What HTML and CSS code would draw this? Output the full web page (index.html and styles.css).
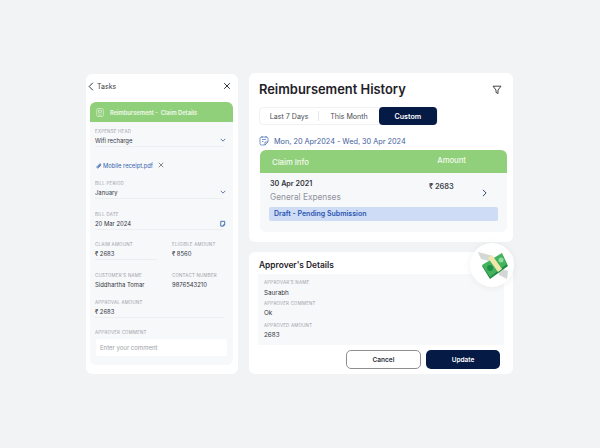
FILE: index.html
```html
<!DOCTYPE html>
<html lang="en">
  <head>
    <meta charset="UTF-8" />
    <title>Reimbursement</title>
    <link rel="stylesheet" href="styles.css">
  </head>
  <body>
    <div class="page">
      <section class="card task-card">
        <div class="task-top">
          <svg class="back-icon" viewBox="0 0 8 12"><path d="M6.500 1 1.500 6l5 5" /></svg>
          <span class="task-title">Tasks</span>
          <svg class="close-icon" viewBox="0 0 10 10"><path d="M1.500 1.500l7 7M8.500 1.500l-7 7" /></svg>
        </div>
        <div class="claim">
          <div class="claim-head">
            <svg class="doc-icon" viewBox="0 0 12 14"><rect x="1" y="1" width="10" height="12" rx="2" /><rect x="3.500" y="3.500" width="5" height="3" /><path d="M3.500 9h2M7 9h1.500M3.500 11h5" /></svg>
            <span>Reimbursement -&nbsp; Claim Details</span>
          </div>
          <div class="claim-body">
            <div class="field">
              <div class="label">EXPENSE HEAD</div>
              <div class="value-row">
                <span class="value">Wifi recharge</span>
                <svg class="chev" viewBox="0 0 8 5"><path d="M1 1l3 3 3-3" /></svg>
              </div>
            </div>
            <div class="attachment">
              <svg class="clip-icon" viewBox="0 0 8 8"><path d="M6.800 3.600 3.800 6.600C3 7.400 1.600 6.200 2.400 5.300L5.400 2.200C6 1.600 6.900 2.400 6.300 3L3.500 5.800" /></svg>
              <span>Mobile receipt.pdf</span>
              <svg class="x-icon" viewBox="0 0 8 8"><path d="M1 1l6 6M7 1l-6 6" /></svg>
            </div>
            <div class="field field-period">
              <div class="label">BILL PERIOD</div>
              <div class="value-row">
                <span class="value">January</span>
                <svg class="chev" viewBox="0 0 8 5"><path d="M1 1l3 3 3-3" /></svg>
              </div>
            </div>
            <div class="field field-date">
              <div class="label">BILL DATE</div>
              <div class="value-row">
                <span class="value">20 Mar 2024</span>
                <svg class="cal-icon" viewBox="0 0 8 8"><path d="M5 7H2V1.500h4.500V5.500zM5 7V5.500h1.500" /></svg>
              </div>
            </div>
            <div class="two-col">
              <div class="field">
                <div class="label">CLAIM AMOUNT</div>
                <div class="value-row"><span class="value">₹ 2683</span></div>
              </div>
              <div class="field plain">
                <div class="label">ELIGIBLE AMOUNT</div>
                <div class="value-row"><span class="value">₹ 8560</span></div>
              </div>
              <div class="field plain">
                <div class="label">CUSTOMER'S NAME</div>
                <div class="value-row"><span class="value">Siddhartha Tomar</span></div>
              </div>
              <div class="field plain">
                <div class="label">CONTACT NUMBER</div>
                <div class="value-row"><span class="value">9876543210</span></div>
              </div>
            </div>
            <div class="field field-approval">
              <div class="label">APPROVAL AMOUNT</div>
              <div class="value-row"><span class="value">₹ 2683</span></div>
            </div>
            <div class="label comment-label">APPROVER COMMENT</div>
            <div class="comment-box">Enter your comment</div>
          </div>
        </div>
      </section>

      <div class="right-col">
        <section class="card history-card">
          <div class="history-top">
            <h1>Reimbursement History</h1>
            <svg class="filter-icon" viewBox="0 0 10 10"><path d="M1 1.200h8L6 5v3.600L4 7.400V5z" /></svg>
          </div>
          <div class="tabs">
            <div class="tab tab-first">Last 7 Days</div>
            <div class="tab tab-month">This Month</div>
            <div class="tab tab-active">Custom</div>
          </div>
          <div class="date-range">
            <svg class="range-icon" viewBox="0 0 10 10"><path d="M6 9H2.500A1.500 1.500 0 0 1 1 7.500v-5A1.500 1.500 0 0 1 2.500 1h5A1.500 1.500 0 0 1 9 2.500V6zM6 9V6h3M3 3.500h4M3 5.500h1.500M3 0v2M7 0v2" /></svg>
            <span>Mon, 20 Apr2024 - Wed, 30 Apr 2024</span>
          </div>
          <div class="claim-table">
            <div class="table-head">
              <span class="head-info">Claim Info</span>
              <span class="head-amount">Amount</span>
            </div>
            <div class="table-body">
              <div class="row-main">
                <div class="row-left">
                  <div class="row-date">30 Apr 2021</div>
                  <div class="row-type">General Expenses</div>
                </div>
                <div class="row-amount">₹ 2683</div>
                <svg class="row-chev" viewBox="0 0 6 10"><path d="M1 1l4 4-4 4" /></svg>
              </div>
              <div class="status">Draft - Pending Submission</div>
            </div>
          </div>
        </section>

        <section class="card approver-card">
          <h2>Approver's Details</h2>
          <div class="approver-box">
            <div class="label">APPROVAR'S NAME</div>
            <div class="value approver-value name-value">Saurabh</div>
            <div class="label comment-gap">APPROVER COMMENT</div>
            <div class="value approver-value">Ok</div>
            <div class="label amount-gap">APPROVED AMOUNT</div>
            <div class="value approver-value">2683</div>
          </div>
          <div class="actions">
            <button class="btn-cancel">Cancel</button>
            <button class="btn-update">Update</button>
          </div>
          <div class="money-badge">
            <svg viewBox="0 0 44 44" width="44" height="44">
              <path d="M8 9l15 4-4 5-8-2z" fill="#d3d8d4" />
              <path d="M27 24l11 4-1 8-8-4z" fill="#d3d8d4" />
              <path d="M12 23l8 13L38 23 32 11z" fill="#1c8a42" />
              <path d="M12 22 32 10l5 11-17 13z" fill="#45b25e" />
              <path d="M18 15l4-3 10 14-4 3z" fill="#f0e7ad" />
              <circle cx="20" cy="25" r="3" fill="#1f8f45" />
              <circle cx="31" cy="17" r="2.500" fill="#8fdca0" />
            </svg>
          </div>
        </section>
      </div>
    </div>
  </body>
</html>
```

FILE: styles.css
```css
body {
  margin: 0;
  background: #f1f3f5;
  font-family: "Inter", sans-serif;
  color: #2b2f38;
}
.page {
  display: flex;
  gap: 11px;
  width: 600px;
  height: 448px;
  box-sizing: border-box;
  padding: 73px 0 0 86px;
}
.card {
  background: white;
  border-radius: 6px;
}

/* left card */
.task-card {
  width: 152px;
  height: 300px;
  margin-top: 1px;
  padding: 0 5px 0 4px;
  box-sizing: border-box;
}
.task-top {
  display: flex;
  align-items: center;
  height: 24px;
  padding-bottom: 4px;
}
.task-title {
  font-size: 7px;
  margin-left: 3px;
  color: #3a3e46;
}
.back-icon {
  width: 6px;
  height: 9px;
  margin-left: -2px;
  fill: none;
  stroke: #2b2f38;
  stroke-width: 1.300;
}
.close-icon {
  width: 8px;
  height: 8px;
  margin-left: auto;
  margin-right: 2px;
  fill: none;
  stroke: #2b2f38;
  stroke-width: 1.200;
}
.claim {
  background: #f7f8fa;
  border-radius: 6px;
  height: 263px;
}
.claim-head {
  display: flex;
  align-items: center;
  gap: 6px;
  height: 20px;
  padding-left: 6px;
  background: #90d07a;
  border-radius: 6px 6px 0 0;
  color: #f2f9ec;
  font-size: 5.750px;
  font-weight: 600;
}
.doc-icon {
  width: 8px;
  height: 11px;
  fill: none;
  stroke: #f2f9ec;
  stroke-width: 0.800;
}
.claim-body {
  padding: 7px 6px 0 5px;
}
.label {
  font-size: 4.400px;
  letter-spacing: 0.250px;
  color: #9a9ea6;
  line-height: 6px;
}
.value {
  font-size: 5.900px;
  color: #33373f;
}
.value-row {
  display: flex;
  align-items: center;
  justify-content: space-between;
  height: 10px;
  margin-right: -2px;
}
.field {
  border-bottom: 1px solid #eceef1;
  padding-bottom: 1px;
  margin-right: 3px;
}
.two-col .field {
  margin-right: 0;
}
.field.plain {
  border-bottom-color: transparent;
}
.chev {
  width: 6px;
  height: 4px;
  fill: none;
  stroke: #2f4f8f;
  stroke-width: 1;
}
.attachment {
  display: flex;
  align-items: center;
  gap: 1px;
  margin-top: 13px;
  height: 10px;
  font-size: 5.800px;
  color: #2f62ad;
}
.clip-icon {
  width: 7px;
  height: 7px;
  fill: none;
  stroke: #2f62ad;
  stroke-width: 1;
}
.x-icon {
  width: 6px;
  height: 6px;
  margin-left: 4px;
  fill: none;
  stroke: #3a3e46;
  stroke-width: 0.800;
}
.field-period {
  margin-top: 11px;
}
.field-date {
  margin-top: 13px;
}
.cal-icon {
  width: 7px;
  height: 7px;
  fill: none;
  stroke: #2f62ad;
  stroke-width: 1;
}
.two-col {
  display: grid;
  grid-template-columns: 62px 62px;
  column-gap: 15px;
  row-gap: 13px;
  margin-top: 12px;
}
.field-approval {
  margin-top: 9px;
}
.comment-label {
  margin-top: 12px;
}
.comment-box {
  margin-top: 3px;
  height: 17px;
  line-height: 17px;
  padding-left: 4px;
  margin-left: 1px;
  background: white;
  border-radius: 2px;
  font-size: 6px;
  color: #9a9ea6;
}

/* right column */
.right-col {
  display: flex;
  flex-direction: column;
  gap: 10px;
  width: 264px;
}
.history-card {
  height: 169px;
  padding: 0 6px 0 10px;
  box-sizing: border-box;
}
.history-top {
  display: flex;
  align-items: center;
  justify-content: space-between;
  height: 33px;
  padding-right: 5px;
}
h1 {
  margin: 0;
  font-size: 12.900px;
  font-weight: 600;
  color: #1f2128;
}
.filter-icon {
  width: 10px;
  height: 10px;
  fill: none;
  stroke: #2b2f38;
  stroke-width: 0.900;
}
.tabs {
  display: flex;
  width: 179px;
  height: 18px;
  margin-top: 1px;
  border: 1px solid #f0f1f4;
  border-radius: 4px;
  box-sizing: border-box;
  font-size: 7.100px;
  color: #4a4e56;
}
.tab {
  display: flex;
  align-items: center;
  justify-content: center;
}
.tab-first {
  width: 59px;
  border-right: 1px solid #e4e6ea;
  margin: 3px 0;
}
.tab-month {
  width: 60px;
}
.tab-active {
  width: 59px;
  margin: -1px 0 -1px 0;
  background: #051a45;
  color: white;
  font-weight: 600;
  border-radius: 4px;
}
.date-range {
  display: flex;
  align-items: center;
  gap: 5px;
  height: 12px;
  margin-top: 10px;
  font-size: 7.300px;
  color: #3f5d9c;
}
.range-icon {
  width: 10px;
  height: 10px;
  fill: none;
  stroke: #3f6cb0;
  stroke-width: 0.700;
}
.claim-table {
  width: 247px;
  margin: 3px 0 0 1px;
  background: #f7f8fa;
  border-radius: 6px;
}
.table-head {
  display: flex;
  align-items: center;
  height: 23px;
  background: #90d07a;
  border-radius: 6px 6px 0 0;
  color: #f4faef;
  font-size: 7.700px;
  font-weight: 500;
}
.head-info {
  margin-left: 12px;
  margin-top: 1px;
}
.head-amount {
  margin-left: auto;
  margin-right: 41px;
  margin-top: -2px;
}
.table-body {
  padding: 5px 9px 0 9px;
  height: 54px;
}
.row-main {
  display: flex;
  align-items: flex-start;
  height: 29px;
}
.row-left {
  width: 160px;
}
.row-date {
  font-size: 7.200px;
  font-weight: 600;
  line-height: 11px;
  color: #33363d;
  margin-left: 1px;
}
.row-type {
  font-size: 8.300px;
  line-height: 12px;
  margin-top: 2px;
  margin-left: 1px;
  color: #8f939c;
}
.row-amount {
  font-size: 7.400px;
  font-weight: 600;
  line-height: 13px;
  width: 53px;
  margin-top: 2px;
  color: #42464e;
}
.row-chev {
  width: 5px;
  height: 8px;
  margin-top: 11px;
  fill: none;
  stroke: #17305f;
  stroke-width: 1.100;
}
.status {
  height: 14px;
  line-height: 14px;
  padding-left: 5px;
  background: #cfdcf5;
  border-radius: 2px;
  font-size: 7px;
  font-weight: 600;
  color: #2a55b0;
}

/* approver card */
.approver-card {
  position: relative;
  height: 122px;
  padding: 0 8px 0 9px;
  box-sizing: border-box;
}
h2 {
  margin: 0;
  padding: 6px 0 0 1px;
  height: 16px;
  font-size: 8.400px;
  font-weight: 600;
  line-height: 15px;
  color: #1f2128;
}
.approver-box {
  width: 246px;
  height: 71px;
  padding: 6px 6px 0 6px;
  box-sizing: border-box;
  background: #f7f8fa;
}
.approver-value {
  font-size: 6.300px;
  line-height: 12px;
}
.name-value {
  margin-top: 1px;
}
.comment-gap {
  margin-top: 2px;
}
.amount-gap {
  margin-top: 4px;
}
.actions {
  display: flex;
  justify-content: flex-end;
  gap: 5px;
  margin-top: 5px;
  padding-right: 5px;
}
.actions button {
  height: 19px;
  border-radius: 5px;
  font-family: "Inter", sans-serif;
  font-size: 6.500px;
  font-weight: 600;
}
.btn-cancel {
  width: 75px;
  background: white;
  border: 1px solid #8f8f8f;
  color: #2b2f38;
}
.btn-update {
  width: 74px;
  background: #051a45;
  border: none;
  color: white;
}
.money-badge {
  position: absolute;
  right: -1px;
  top: -9px;
  width: 44px;
  height: 44px;
  background: white;
  border-radius: 50%;
  box-shadow: 0 1px 6px rgba(120, 130, 140, 0.12);
}
```
